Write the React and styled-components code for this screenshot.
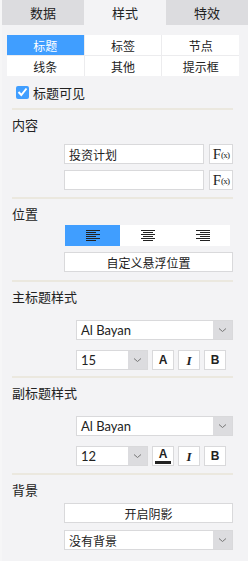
import React from 'react'
import styled, { createGlobalStyle } from 'styled-components'

const Global = createGlobalStyle`
body {
  margin: 0;
  background: #f3f3f5;
  font-family: "Noto Sans CJK SC", "Liberation Sans", sans-serif;
  color: #333;
}
`

const Panel = styled.div`
width: 248px;
min-height: 561px;
background: #f3f3f5;
box-sizing: border-box;
border-left: 2px solid #f6f6f7;
`

const Tabs = styled.div`
display: flex;
height: 25px;
`

const Tab = styled.div`
flex: 1;
display: flex;
align-items: center;
justify-content: center;
font-size: 13px;
color: #222;
background: ${p => (p.$active ? '#f3f3f5' : '#dcdcdf')};
`

const Body = styled.div`
padding: 10px 9px 0 5px;
`

const SubTabs = styled.div`
display: grid;
grid-template-columns: repeat(3, 1fr);
gap: 1px;
background: #ececee;
`

const SubTab = styled.div`
height: 20px;
display: flex;
align-items: center;
justify-content: center;
font-size: 12px;
color: ${p => (p.$active ? '#fff' : '#222')};
background: ${p => (p.$active ? '#409eff' : '#fff')};
`

const Inner = styled.div`
padding: 0 6px 0 5px;
`

const CheckRow = styled.label`
display: flex;
align-items: center;
gap: 4px;
margin: 9px 0 0 4px;
height: 14px;
font-size: 13px;
color: #222;
`

const Box = styled.span`
width: 13px;
height: 13px;
border-radius: 2px;
background: #409eff;
display: flex;
align-items: center;
justify-content: center;
`

const Divider = styled.div`
height: 2px;
background: #ebe8df;
margin-top: ${p => p.$mt || 7}px;
`

const Title = styled.div`
font-size: 13px;
line-height: 16px;
color: #222;
margin-top: 7px;
`

const Row = styled.div`
display: flex;
align-items: center;
gap: ${p => p.$gap || 5}px;
padding-left: ${p => p.$indent || 52}px;
margin-top: ${p => p.$mt || 6}px;
height: ${p => p.$h || 20}px;
`

const Field = styled.div`
flex: 1;
height: 20px;
box-sizing: border-box;
border: 1px solid #d9d9db;
background: #fff;
display: flex;
align-items: center;
padding-left: 4px;
font-size: 12px;
color: #222;
`

const Fx = styled.div`
width: 24px;
height: 20px;
box-sizing: border-box;
border: 1px solid #d9d9db;
background: #fff;
display: flex;
align-items: center;
justify-content: center;
font-family: "Liberation Serif", "DejaVu Serif", serif;
color: #222;
& b { font-size: 15px; font-weight: normal; }
& small { font-size: 9px; letter-spacing: -0.8px; margin-top: 2px; }
`

const Button = styled.div`
flex: 1;
height: 20px;
box-sizing: border-box;
border: 1px solid #d9d9db;
background: #fff;
display: flex;
align-items: center;
justify-content: center;
font-size: 12px;
color: #222;
`

const Select = styled.div`
flex: ${p => (p.$w ? 'none' : 1)};
width: ${p => (p.$w ? `${p.$w}px` : 'auto')};
height: 20px;
box-sizing: border-box;
border: 1px solid #d9d9db;
background: #fff;
display: flex;
align-items: stretch;
font-family: ${p => (p.$latin ? '"Lato", "Liberation Sans", sans-serif' : 'inherit')};
font-size: ${p => (p.$latin ? 13 : 12)}px;
color: #222;
`

const SelectText = styled.span`
flex: 1;
display: flex;
align-items: center;
padding-left: 4px;
`

const Arrow = styled.span`
width: 19px;
background: #dcdcdf;
display: flex;
align-items: center;
justify-content: center;
`

const Aligns = styled.div`
display: flex;
width: 165px;
height: 21px;
margin-left: 1px;
`

const AlignCell = styled.div`
flex: 1;
display: flex;
align-items: center;
justify-content: center;
background: ${p => (p.$active ? '#409eff' : '#fff')};
`

const StyleBtn = styled.div`
width: 22px;
height: 20px;
box-sizing: border-box;
border: 1px solid #d9d9db;
background: #fff;
display: flex;
flex-direction: column;
align-items: center;
justify-content: center;
font-family: ${p => (p.$serif ? '"Liberation Serif", serif' : '"Liberation Sans", sans-serif')};
font-style: ${p => (p.$serif ? 'italic' : 'normal')};
font-weight: bold;
font-size: ${p => (p.$serif ? 13 : 12)}px;
color: #222;
line-height: 1;
`

const ColorBar = styled.span`
width: 16px;
height: 3px;
background: #222;
margin-top: 1px;
`

const Chevron = () => (
  <svg width="9" height="6" viewBox="0 0 9 6">
    <path d="M1 1.5 L4.5 4.5 L8 1.5" fill="none" stroke="#777" strokeWidth="1" />
  </svg>
)

const Check = () => (
  <svg width="11" height="10" viewBox="0 0 11 10">
    <path d="M1.5 5 L4.3 8 L9.5 1.5" fill="none" stroke="#fff" strokeWidth="2" />
  </svg>
)

const AlignIcon = ({ mode }) => {
  const widths = [14, 10, 14, 10, 14, 10]
  return (
    <svg width="14" height="11" viewBox="0 0 14 11" shapeRendering="crispEdges">
      {widths.map((w, i) => {
        const x = mode === 'left' ? 0 : mode === 'center' ? (14 - w) / 2 : 14 - w
        return <rect key={i} x={x} y={i * 2} width={w} height="1" fill="#222" />
      })}
    </svg>
  )
}

const Drop = ({ children, w, latin }) => (
  <Select $w={w} $latin={latin}>
    <SelectText>{children}</SelectText>
    <Arrow><Chevron /></Arrow>
  </Select>
)

const FontBlock = ({ size, underline }) => (
  <>
    <Row $indent={64} $mt={15}>
      <Drop latin>Al Bayan</Drop>
    </Row>
    <Row $indent={64} $mt={10} $gap={4}>
      <Drop w={72} latin>{size}</Drop>
      <StyleBtn>
        A
        {underline && <ColorBar />}
      </StyleBtn>
      <StyleBtn $serif>I</StyleBtn>
      <StyleBtn>B</StyleBtn>
      <span style={{ width: 0 }} />
    </Row>
  </>
)

export default function App() {
  return (
    <Panel>
      <Global />
      <Tabs>
        <Tab>数据</Tab>
        <Tab $active>样式</Tab>
        <Tab>特效</Tab>
      </Tabs>
      <Body>
        <SubTabs>
          <SubTab $active>标题</SubTab>
          <SubTab>标签</SubTab>
          <SubTab>节点</SubTab>
          <SubTab>线条</SubTab>
          <SubTab>其他</SubTab>
          <SubTab>提示框</SubTab>
        </SubTabs>
        <Inner>
          <CheckRow>
            <Box><Check /></Box>
            标题可见
          </CheckRow>
          <Divider $mt={9} />

          <Title>内容</Title>
          <Row $mt={11}>
            <Field>投资计划</Field>
            <Fx><b>F</b><small>(x)</small></Fx>
          </Row>
          <Row>
            <Field />
            <Fx><b>F</b><small>(x)</small></Fx>
          </Row>
          <Divider />

          <Title>位置</Title>
          <Row $mt={3} $h={21}>
            <Aligns>
              <AlignCell $active><AlignIcon mode="left" /></AlignCell>
              <AlignCell><AlignIcon mode="center" /></AlignCell>
              <AlignCell><AlignIcon mode="right" /></AlignCell>
            </Aligns>
          </Row>
          <Row>
            <Button>自定义悬浮位置</Button>
          </Row>
          <Divider $mt={8} />

          <Title>主标题样式</Title>
          <FontBlock size="15" />
          <Divider $mt={6} />

          <Title>副标题样式</Title>
          <FontBlock size="12" underline />
          <Divider $mt={7} />

          <Title>背景</Title>
          <Row $mt={5}>
            <Button>开启阴影</Button>
          </Row>
          <Row $mt={7}>
            <Drop>没有背景</Drop>
          </Row>
          <Divider $mt={19} />
        </Inner>
      </Body>
    </Panel>
  )
}
